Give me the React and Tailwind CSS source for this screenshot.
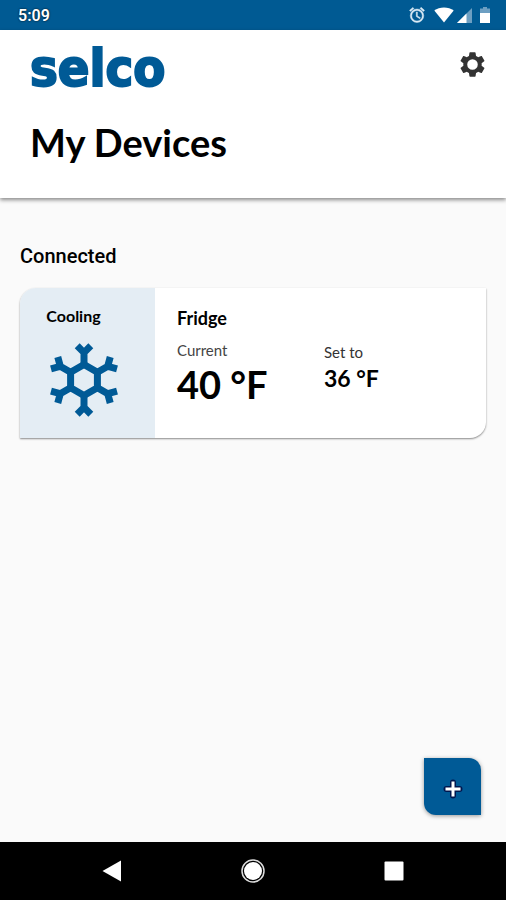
import React from "react";

const DEVICES = [
  { id: 1, mode: "Cooling", name: "Fridge", current: "40 °F", target: "36 °F" },
];

const ARMS = [0, 60, 120, 180, 240, 300];

function Snowflake() {
  return (
    <svg viewBox="-37 -38 74 76" className="w-[74px] h-[76px]" fill="none" stroke="#005a96" strokeWidth="7" aria-hidden="true">
      <path d="M0-15.5 13.4-7.75V7.75L0 15.5-13.4 7.75V-7.75Z" />
      {ARMS.map((a) => (
        <path key={a} d="M0-15V-27M-6.8-34.2 0-27.4 6.8-34.2" transform={`rotate(${a})`} />
      ))}
    </svg>
  );
}

function StatusBar() {
  return (
    <div className="h-[30px] bg-[#005a93] flex items-center justify-between pl-[18px] pr-4 text-white">
      <span className="pt-0.5 text-base font-semibold [text-shadow:0_0_2px_#000]">5:09</span>
      <div className="flex items-center">
        <svg viewBox="0 0 24 24" className="w-[18px] h-[18px] mr-2" fill="#dcebf5" stroke="#dcebf5" strokeWidth="0.6" aria-hidden="true">
          <path d="m22 5.7-4.6-3.9-1.3 1.5 4.6 3.9zM7.9 3.4 6.6 1.9 2 5.7l1.3 1.5zM12.5 8H11v6l4.7 2.9.8-1.3-4-2.3zM12 4a9 9 0 1 0 0 18 9 9 0 0 0 0-18m0 16a7 7 0 1 1 0-14 7 7 0 0 1 0 14" />
        </svg>
        <svg viewBox="0 0 20 16" className="w-5 h-4 mr-[3px]" fill="#fff" aria-hidden="true">
          <path d="M10 15.5.3 3.6C3 1.5 6.3.4 10 .4s7 1.1 9.7 3.2z" />
        </svg>
        <svg viewBox="0 0 15 15" className="w-[15px] h-[15px] mr-2" aria-hidden="true">
          <path d="M0 15 15 0v15z" fill="#6d9fc2" />
          <path d="M0 15 9.5 5.5V15z" fill="#fff" />
        </svg>
        <svg viewBox="0 0 10 16" className="w-2.5 h-4" aria-hidden="true">
          <path d="M0 1.5h3V0h4v1.5h3V7H0z" fill="#6d9fc2" />
          <path d="M0 6h10v10H0z" fill="#fff" />
        </svg>
      </div>
    </div>
  );
}

function Header() {
  return (
    <header className="bg-white h-[168px] pl-[30px] pr-5 shadow-[0_2px_4px_rgba(0,0,0,0.45)]">
      <div className="flex items-start justify-between">
        <div className="h-[78px] pt-1.5 text-[52px] leading-[64px] font-bold text-[#005a96] [-webkit-text-stroke:2px_#005a96] font-['DejaVu_Sans_Condensed','DejaVu_Sans',sans-serif]">
          selco
        </div>
        <button type="button" aria-label="Settings" className="mt-[21px] w-[27px] h-[27px]">
          <svg viewBox="1 1 22 22" className="w-full h-full" fill="#333" aria-hidden="true">
            <path d="M19.43 12.98c.04-.32.07-.64.07-.98s-.03-.66-.07-.98l2.11-1.65c.19-.15.24-.42.12-.64l-2-3.46c-.12-.22-.39-.3-.61-.22l-2.49 1c-.52-.4-1.08-.73-1.69-.98l-.38-2.65A.49.49 0 0 0 14 2h-4c-.25 0-.46.18-.49.42l-.38 2.65c-.61.25-1.17.59-1.69.98l-2.49-1c-.23-.09-.49 0-.61.22l-2 3.46c-.13.22-.07.49.12.64l2.11 1.65c-.04.32-.07.65-.07.98s.03.66.07.98l-2.11 1.65c-.19.15-.24.42-.12.64l2 3.46c.12.22.39.3.61.22l2.49-1c.52.4 1.08.73 1.69.98l.38 2.65c.03.24.24.42.49.42h4c.25 0 .46-.18.49-.42l.38-2.65c.61-.25 1.17-.59 1.69-.98l2.49 1c.23.09.49 0 .61-.22l2-3.46c.12-.22.07-.49-.12-.64zM12 16.3a4.3 4.3 0 1 1 0-8.6 4.3 4.3 0 0 1 0 8.6" />
          </svg>
        </button>
      </div>
      <h1 className="pt-2.5 text-[38px] leading-12 font-bold text-black font-[Lato,sans-serif]">My Devices</h1>
    </header>
  );
}

function DeviceCard({ device }) {
  return (
    <article className="flex min-h-[150px] bg-white rounded-tl-2xl rounded-br-2xl overflow-hidden shadow-[0_1px_2px_rgba(0,0,0,0.45)] font-[Lato,sans-serif] text-black">
      <div className="w-[135px] shrink-0 bg-[#e4edf4] flex flex-col items-center pt-[18px] pr-2">
        <span className="text-base leading-5 font-bold pr-5">{device.mode}</span>
        <div className="pt-4">
          <Snowflake />
        </div>
      </div>
      <div className="flex-1 pl-[22px] pt-[18px]">
        <h3 className="text-lg leading-6 font-bold">{device.name}</h3>
        <dl className="grid grid-cols-[147px_1fr] pt-2">
          <div>
            <dt className="text-[15px] leading-5 pt-0.5 text-[#444]">Current</dt>
            <dd className="text-[38px] leading-12 font-bold">{device.current}</dd>
          </div>
          <div>
            <dt className="text-[15px] leading-5 pt-1 text-[#333]">Set to</dt>
            <dd className="text-[23px] leading-8 font-bold">{device.target}</dd>
          </div>
        </dl>
      </div>
    </article>
  );
}

function NavBar() {
  return (
    <nav className="h-[58px] bg-black flex items-center justify-between px-[100px]">
      <button type="button" aria-label="Back" className="w-6 h-6">
        <svg viewBox="0 0 24 24" fill="#fff" aria-hidden="true">
          <path d="M2.5 12 21 1.5v21z" />
        </svg>
      </button>
      <button type="button" aria-label="Home" className="w-6 h-6">
        <svg viewBox="0 0 24 24" aria-hidden="true">
          <circle cx="12" cy="12" r="11" fill="none" stroke="#ddd" strokeWidth="1.5" />
          <circle cx="12" cy="12" r="9" fill="#fff" />
        </svg>
      </button>
      <button type="button" aria-label="Recent apps" className="w-6 h-6">
        <svg viewBox="0 0 24 24" aria-hidden="true">
          <rect x="2.5" y="2.5" width="19" height="19" rx="1" fill="#fff" />
        </svg>
      </button>
    </nav>
  );
}

export default function App() {
  return (
    <div className="min-h-screen flex flex-col bg-[#fafafa] font-[Roboto,sans-serif]">
      <StatusBar />
      <Header />
      <main className="flex-1 flex flex-col px-5 pt-[46px]">
        <h2 className="text-[20px] leading-6 font-medium text-black mb-5">Connected</h2>
        {DEVICES.map((d) => (
          <DeviceCard key={d.id} device={d} />
        ))}
        <button
          type="button"
          aria-label="Add device"
          className="mt-auto self-end mb-[27px] mr-[5px] w-[57px] h-[57px] flex items-center justify-center bg-[#005a96] rounded-tr-xl rounded-bl-xl shadow-[0_1px_4px_rgba(0,0,0,0.4)]"
        >
          <svg viewBox="0 0 20 20" className="w-5 h-5 mt-1" aria-hidden="true">
            <path d="M10 3.5v13M3.500 10h13" stroke="#00174f" strokeWidth="6" strokeLinecap="round" />
            <path d="M10 2.5v15M2.500 10h15" stroke="#fff" strokeWidth="3" />
          </svg>
        </button>
      </main>
      <NavBar />
    </div>
  );
}
